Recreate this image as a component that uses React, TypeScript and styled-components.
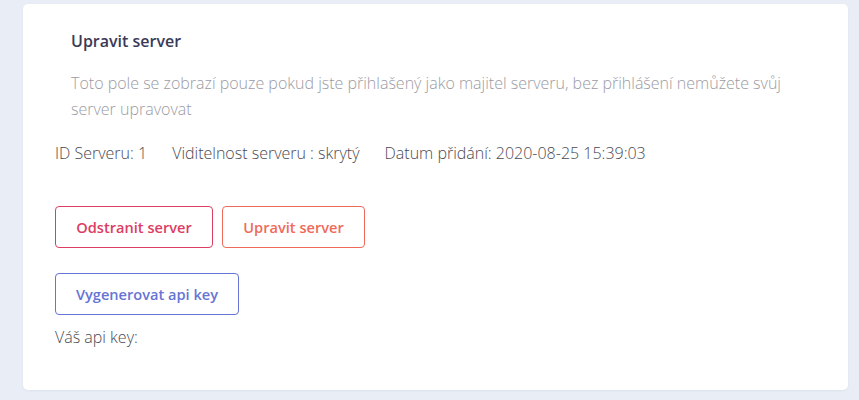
import React from "react";
import styled, { createGlobalStyle } from "styled-components";

const Global = createGlobalStyle`
  html, body { margin: 0; padding: 0; }
  body {
    background: #e9edf5;
    font-family: "Open Sans", "Noto Sans", sans-serif;
    width: 859px;
    height: 400px;
    overflow: hidden;
  }
`;

const Page = styled.div`
  padding: 4px 11px 0 23px;
`;

const Card = styled.div`
  background: #ffffff;
  border-radius: 5px;
  height: 386px;
  box-sizing: border-box;
  padding: 25px 32px 0 32px;
  box-shadow: 0 1px 2px rgba(160, 170, 200, 0.15);
`;

const Header = styled.div`
  padding: 0 16px;
`;

const Title = styled.h3`
  margin: 0;
  font-size: 16px;
  font-weight: 600;
  color: #3a3a58;
  line-height: 24px;
`;

const Description = styled.p`
  margin: 17px 0 0 0;
  font-size: 16px;
  font-weight: 300;
  color: #9b9ba3;
  line-height: 26px;
`;

const InfoRow = styled.div`
  display: flex;
  gap: 25px;
  margin-top: 19px;
  font-size: 16px;
  font-weight: 300;
  color: #4a4a52;
  line-height: 24px;
`;

const ButtonRow = styled.div<{ $top: number }>`
  display: flex;
  gap: 9px;
  margin-top: ${(p) => p.$top}px;
`;

const Button = styled.button<{ $color: string; $w: number }>`
  box-sizing: border-box;
  width: ${(p) => p.$w}px;
  height: 42px;
  background: #fff;
  border: 1px solid ${(p) => p.$color};
  color: ${(p) => p.$color};
  border-radius: 4px;
  font-family: "Open Sans", "Noto Sans", sans-serif;
  font-size: 14.6px;
  font-weight: 600;
  padding: 0;
  cursor: pointer;
`;

const KeyLabel = styled.div`
  margin-top: 10px;
  font-size: 16px;
  font-weight: 300;
  color: #4a4a52;
  line-height: 24px;
`;

export default function App() {
  return (
    <>
      <Global />
      <Page>
        <Card>
          <Header>
            <Title>Upravit server</Title>
            <Description>
              Toto pole se zobrazí pouze pokud jste přihlašený jako majitel serveru, bez přihlášení nemůžete svůj server upravovat
            </Description>
          </Header>
          <InfoRow>
            <span>ID Serveru: 1</span>
            <span>Viditelnost serveru : skrytý</span>
            <span>Datum přidání: 2020-08-25 15:39:03</span>
          </InfoRow>
          <ButtonRow $top={41}>
            <Button $color="#dc3d63" $w={158}>Odstranit server</Button>
            <Button $color="#ef6a5a" $w={143}>Upravit server</Button>
          </ButtonRow>
          <ButtonRow $top={25}>
            <Button $color="#6674d4" $w={184}>Vygenerovat api key</Button>
          </ButtonRow>
          <KeyLabel>Váš api key:</KeyLabel>
        </Card>
      </Page>
    </>
  );
}
